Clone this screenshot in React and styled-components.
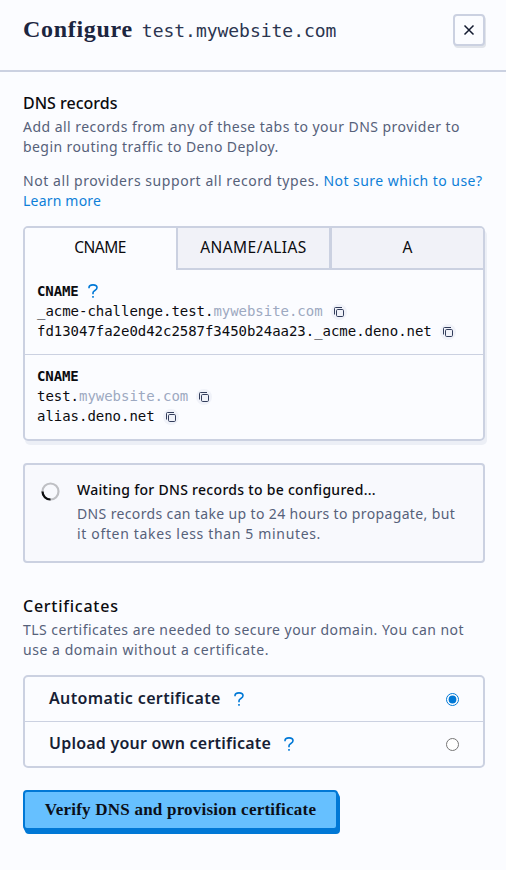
import React from "react";
import styled, { createGlobalStyle } from "styled-components";

const line = "#cbd1e1";
const blue = "#0078d6";

const Global = createGlobalStyle`
  * { box-sizing: border-box; }
  body { margin: 0; background: #fbfcff; color: #0b0b0f; font-family: "Noto Sans", sans-serif; }
  h1, h2, p { margin: 0; font-weight: inherit; }
`;

const Page = styled.div`
  width: 506px;
  height: 870px;
  overflow: hidden;
  background: #fbfcff;
`;
const Header = styled.header`
  display: flex;
  justify-content: space-between;
  height: 72px;
  padding: 14px 21px 0 23px;
  border-bottom: 2px solid ${line};
`;
const Heading = styled.h1`
  display: flex;
  align-items: baseline;
  gap: 9px;
  height: 32px;
  margin-top: -1px;
  font: 700 24px/32px "Liberation Serif", serif;
  letter-spacing: 0.7px;
  color: #1c2540;
  white-space: nowrap;
`;
const Domain = styled.span`
  font: 400 18px/32px "DejaVu Sans Mono", monospace;
  letter-spacing: -0.03px;
  color: #2b3550;
`;
const CloseButton = styled.button`
  display: flex;
  align-items: center;
  justify-content: center;
  width: 32px;
  height: 32px;
  padding: 0;
  color: #131a30;
  background: #fbfcff;
  border: 2px solid ${line};
  border-radius: 4px;
  box-shadow: 1px 2px 0 #e1e4ea;
`;
const Main = styled.main`
  padding: 19px 21px 0 23px;
`;
const SectionTitle = styled.h2`
  height: 26px;
  font-size: 16px;
  font-weight: 500;
  line-height: 24px;
  letter-spacing: ${(p) => p.$spacing}px;
`;
const Paragraph = styled.p`
  color: #56617a;
  font-size: 14px;
  line-height: 20px;
  margin-bottom: ${(p) => p.$gap || 0}px;
  white-space: nowrap;
`;
const TextLine = styled.span`
  display: block;
  letter-spacing: ${(p) => p.$spacing}px;
`;
const Link = styled.a`
  color: #0e7fd8;
  letter-spacing: ${(p) => p.$spacing}px;
`;
const TabPanel = styled.section`
  height: 215px;
  border: 2px solid ${line};
  border-radius: 5px;
  box-shadow: 2px 4px 0 #eceff6;
  overflow: hidden;
`;
const Tabs = styled.div`
  display: grid;
  grid-template-columns: 153px 154px 151px;
  height: 42px;
`;
const Tab = styled.button`
  padding: 0 ${(p) => (p.$active ? "1px 4px" : "0 2px")} 0;
  color: inherit;
  font: 400 15.5px/20px "Noto Sans", sans-serif;
  letter-spacing: ${(p) => p.$spacing || 0}px;
  background: ${(p) => (p.$active ? "#fbfcff" : "#f1f2f8")};
  border: solid ${line};
  border-width: 0 ${(p) => p.$divider || 0}px ${(p) => (p.$active ? 0 : 2)}px 0;
`;
const RecordBlock = styled.div`
  height: 84px;
  padding: 11px 12px 0;
  & + & { height: 85px; border-top: 1px solid ${line}; }
  font: 400 14px/20px "DejaVu Sans Mono", monospace;
  letter-spacing: -0.03px;
  white-space: nowrap;
`;
const RecordRow = styled.div`
  display: flex;
  align-items: center;
  height: 20px;
`;
const RecordType = styled.strong`
  letter-spacing: -0.1px;
  margin-right: 9px;
`;
const Faded = styled.span`
  color: #9da9c1;
`;
const CopyButton = styled.button`
  display: flex;
  align-items: center;
  justify-content: center;
  width: 16px;
  height: 16px;
  margin: 1px 0 0 8px;
  padding: 0;
  border: 0;
  border-radius: 50%;
  background: #f0f2f9;
  color: #333e5c;
`;
const Notice = styled.section`
  display: flex;
  gap: 17px;
  height: 100px;
  margin: 22px 0 31px;
  padding: 15px 16px 0;
  background: #f8f9fd;
  border: 2px solid ${line};
  border-radius: 4px;
`;
const Spinner = styled.svg`
  flex: none;
  margin-top: 2px;
`;
const NoticeTitle = styled.div`
  height: 24px;
  font-size: 14px;
  font-weight: 500;
  line-height: 20px;
  letter-spacing: 0.29px;
`;
const Options = styled.div`
  height: 93px;
  margin: 15px 0 22px;
  border: 2px solid ${line};
  border-radius: 5px;
`;
const Option = styled.label`
  display: flex;
  align-items: center;
  height: 44px;
  padding: 0 24px;
  & + & { height: 45px; border-top: 1px solid ${line}; }
`;
const OptionLabel = styled.span`
  color: #171e35;
  font-size: 16px;
  font-weight: 600;
  line-height: 24px;
  letter-spacing: ${(p) => p.$spacing}px;
  margin: -2px 13px 0 0;
  white-space: nowrap;
`;
const Radio = styled.input.attrs({ type: "radio", name: "certificate" })`
  width: 13px;
  height: 13px;
  margin: 1px 0 0 auto;
  accent-color: ${blue};
`;
const SubmitButton = styled.button`
  width: 315px;
  height: 40px;
  padding: 0;
  color: #0b0f18;
  background: #66c0ff;
  border: 2px solid ${blue};
  border-radius: 4px;
  box-shadow: 1px 2px 0 ${blue}, 2px 4px 0 ${blue};
  font: 700 17px/22px "Liberation Serif", serif;
  letter-spacing: 0.22px;
  white-space: nowrap;
`;

const CloseIcon = () => (
  <svg width="12" height="12" viewBox="0 0 12 12" fill="none" stroke="currentColor" strokeWidth="1.5">
    <path d="M1.5 1.5l9 9M10.5 1.5l-9 9" />
  </svg>
);
const HelpIcon = () => (
  <svg width="10" height="14" viewBox="0 0 10 14" fill="none" stroke={blue} strokeWidth="1.6">
    <path d="M1 4.300V3.700C1 1.900 2.600 .9 5 .9s4 1 4 2.900C9 6.600 5 6.400 5 8.800v1.500" />
    <path d="M5 12v1.700" />
  </svg>
);
const Copy = () => (
  <CopyButton aria-label="Copy">
    <svg width="10" height="10" viewBox="0 0 10 10" fill="none" stroke="currentColor">
      <rect x="2.500" y="2.500" width="7" height="7" rx="1.200" />
      <path d="M.5 7.500V1.500q0-1 1-1h6.500" />
    </svg>
  </CopyButton>
);

export default function App() {
  return (
    <Page>
      <Global />
      <Header>
        <Heading>Configure <Domain>test.mywebsite.com</Domain></Heading>
        <CloseButton aria-label="Close"><CloseIcon /></CloseButton>
      </Header>
      <Main>
        <SectionTitle $spacing={0}>DNS records</SectionTitle>
        <Paragraph $gap={14}>
          <TextLine $spacing={0.46}>Add all records from any of these tabs to your DNS provider to</TextLine>
          <TextLine $spacing={0.42}>begin routing traffic to Deno Deploy.</TextLine>
        </Paragraph>
        <Paragraph $gap={15}>
          <TextLine $spacing={0.565}>
            Not all providers support all record types. <Link $spacing={0.46}>Not sure which to use?</Link>
          </TextLine>
          <Link $spacing={0.2}>Learn more</Link>
        </Paragraph>
        <TabPanel>
          <Tabs>
            <Tab $active $divider={2} $spacing={-0.5}>CNAME</Tab>
            <Tab $divider={3} $spacing={0.45}>ANAME/ALIAS</Tab>
            <Tab>A</Tab>
          </Tabs>
          <RecordBlock>
            <RecordRow><RecordType>CNAME</RecordType> <HelpIcon /></RecordRow>
            <RecordRow>_acme-challenge.test.<Faded>mywebsite.com</Faded><Copy /></RecordRow>
            <RecordRow>fd13047fa2e0d42c2587f3450b24aa23._acme.deno.net<Copy /></RecordRow>
          </RecordBlock>
          <RecordBlock>
            <RecordRow><RecordType>CNAME</RecordType></RecordRow>
            <RecordRow>test.<Faded>mywebsite.com</Faded><Copy /></RecordRow>
            <RecordRow>alias.deno.net<Copy /></RecordRow>
          </RecordBlock>
        </TabPanel>
        <Notice>
          <Spinner width="19" height="19" viewBox="0 0 19 19" fill="none" strokeWidth="2.2">
            <circle cx="9.500" cy="9.500" r="8" stroke="#bfc0c4" />
            <path d="M1.500 9.500a8 8 0 0 0 8 8" stroke="#0c0c0e" />
          </Spinner>
          <div>
            <NoticeTitle>Waiting for DNS records to be configured...</NoticeTitle>
            <Paragraph>
              <TextLine $spacing={0.36}>DNS records can take up to 24 hours to propagate, but</TextLine>
              <TextLine $spacing={0.66}>it often takes less than 5 minutes.</TextLine>
            </Paragraph>
          </div>
        </Notice>
        <SectionTitle $spacing={0.75}>Certificates</SectionTitle>
        <Paragraph>
          <TextLine $spacing={0.46}>TLS certificates are needed to secure your domain. You can not</TextLine>
          <TextLine $spacing={0.55}>use a domain without a certificate.</TextLine>
        </Paragraph>
        <Options>
          <Option>
            <OptionLabel $spacing={0.35}>Automatic certificate</OptionLabel>
            <HelpIcon />
            <Radio defaultChecked />
          </Option>
          <Option>
            <OptionLabel $spacing={0.22}>Upload your own certificate</OptionLabel>
            <HelpIcon />
            <Radio />
          </Option>
        </Options>
        <SubmitButton>Verify DNS and provision certificate</SubmitButton>
      </Main>
    </Page>
  );
}
